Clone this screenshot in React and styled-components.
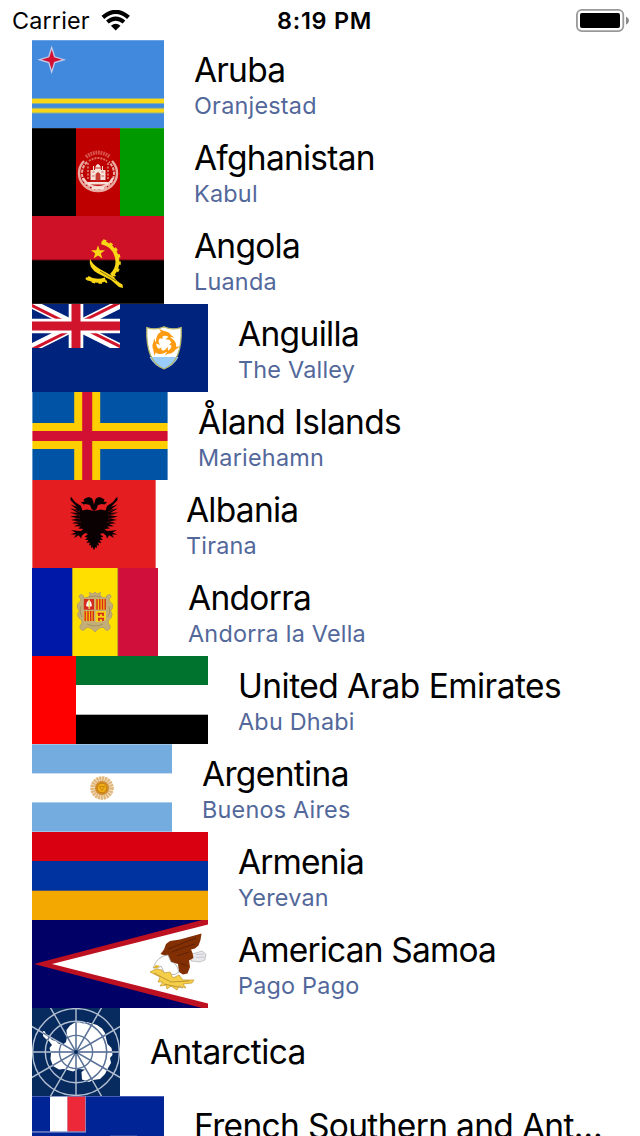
import React from 'react';
import styled, { createGlobalStyle } from 'styled-components';

const GlobalStyle = createGlobalStyle`
  * { box-sizing: border-box; }
  body {
    margin: 0;
    background: #fff;
    font-family: Inter, "Liberation Sans", sans-serif;
  }
`;

const Screen = styled.main`
  width: 640px;
  height: 1136px;
  overflow: hidden;
  background: #fff;
`;

const StatusBar = styled.header`
  display: grid;
  grid-template-columns: 265px 1fr auto;
  align-items: center;
  height: 40px;
  padding: 1px 11px 0 12px;
  color: #000;
  font-size: 23.4px;
  line-height: 28px;
`;

const CarrierGroup = styled.div`
  display: flex;
  align-items: center;
  gap: 11px;
`;

const Carrier = styled.span`
  letter-spacing: 0.15px;
`;

const Clock = styled.time`
  font-weight: 600;
  letter-spacing: 0.75px;
`;

const CountryList = styled.ul`
  margin: 0;
  padding: 0;
  list-style: none;
`;

const CountryRow = styled.li`
  display: flex;
  align-items: center;
  gap: 30px;
  height: 88px;
  padding-left: 32px;
`;

const FlagImage = styled.svg`
  flex: none;
  display: block;
  width: ${(p) => p.$width}px;
  height: 88px;
  overflow: hidden;
`;

const Labels = styled.div`
  display: flex;
  flex-direction: column;
  gap: 2px;
  padding-top: ${(p) => (p.$twoLines ? 1 : 0)}px;
  white-space: nowrap;
`;

const Name = styled.span`
  color: #000;
  font-size: 33.5px;
  line-height: 40px;
  letter-spacing: ${(p) => p.$tracking}px;
`;

const Capital = styled.span`
  min-height: 28px;
  color: #53689a;
  font-size: 23.4px;
  line-height: 28px;
  letter-spacing: 0.22px;
`;

const WifiIcon = () => (
  <svg width="29" height="21" viewBox="0 0 29 21">
    <g fill="none" stroke="#000">
      <path d="M1.9 7.4 Q14.7 -3.6 27.5 7.4" strokeWidth="4.2" />
      <path d="M6.4 12.1 Q14.7 5 23 12.1" strokeWidth="4" />
    </g>
    <path d="M9.9 15.8 Q14.7 11.8 19.5 15.8 L14.7 20.6 Z" />
  </svg>
);

const BatteryIcon = () => (
  <svg width="53" height="24" viewBox="0 0 53 24">
    <rect x="0.9" y="0.9" width="46.4" height="21.2" rx="5" fill="none" stroke="#999" strokeWidth="1.8" />
    <rect x="4" y="4" width="40" height="15" rx="2" />
    <path d="M50 7.5 Q53 9 53 11.6 Q53 14.2 50 15.7 Z" fill="#888" />
  </svg>
);

const Aruba = () => (
  <>
    <rect width="132" height="88" fill="#4189dd" />
    <rect width="132" height="1" fill="#6aa2e4" />
    <path d="M0 61H132M0 70.6H132" stroke="#8eaf8e" strokeWidth="5.8" />
    <path d="M0 61H132M0 70.6H132" stroke="#f9d616" strokeWidth="3.8" />
    <path d="M19.7 7.5 L22.6 16.8 L32 19.7 L22.6 22.6 L19.7 32 L16.8 22.6 L7.4 19.7 L16.8 16.8Z" fill="#d21034" stroke="#c5c8e6" strokeWidth="1.3" />
  </>
);

const Afghanistan = () => (
  <>
    <rect width="44" height="88" />
    <rect x="44" width="44" height="88" fill="#be0000" />
    <rect x="88" width="44" height="88" fill="#009900" />
    <rect width="132" height="1" fill="#fff" opacity=".13" />
    <g fill="none" stroke="#e9aca2">
      <path d="M52 33 A19 18 0 1 0 80 33" strokeWidth="2.4" />
      <path d="M55 34 A16 16 0 1 0 77 34" strokeWidth="2" strokeDasharray="3.2 1.2" />
      <path d="M51 50 A17 17 0 0 0 81 50" strokeWidth="2.2" stroke="#f4d5cd" />
      <path d="M54 29 Q66 20 78 29" stroke="#d7534c" strokeWidth="4" strokeDasharray="1.8 .8" />
      <path d="M57 33 Q66 27 75 33" stroke="#dc6a60" strokeWidth="2" strokeDasharray="2 1" />
      <path d="M56 35V51M76 35V51" strokeWidth="1.2" strokeDasharray="2 1.5" />
    </g>
    <g fill="#f6e2d9">
      <path d="M58.5 52V42h2.5v-4h1v4h1q0-5 3-6q3 1 3 6h1v-4h1v4h2.5v10z" />
      <path d="M56 54h20v2.4h-20zM60 59h12v2.6h-12z" />
    </g>
    <path d="M64 52v-6q2-3 4 0v6zM60.5 44h2M69.5 44h2M60 48h2.5M69.5 48h2.5" fill="#c83a30" stroke="#c83a30" strokeWidth=".8" />
    <path d="M58 53H74M62 40H70" stroke="#c72d25" strokeWidth="1" />
  </>
);

const Angola = () => (
  <>
    <rect width="132" height="44" fill="#ce1126" />
    <rect y="44" width="132" height="44" />
    <rect y="43.5" width="132" height="1" fill="#670913" />
    <rect y="87" width="132" height="1" fill="#252525" />
    <g fill="none" stroke="#f9d616">
      <path d="M69.5 26.4 A19.5 19.5 0 0 1 79.5 59.5" strokeWidth="4" />
      <path d="M71 24.4 A21.6 21.6 0 0 1 82 60" strokeWidth="2.4" strokeDasharray="3.4 3.8" />
      <path d="M55.5 61.5 Q63 67 73.5 63.5" strokeWidth="4" />
      <path d="M54 62 Q63 69 75 65.5" strokeWidth="2.4" strokeDasharray="3.4 3.4" />
    </g>
    <path d="M58 42.5 Q60 48 67 52.5 L82 61 Q84 65 90.5 68.5 L91 72 L87 71 L79 64 L66 57.5 Q56 52 58 42.5Z" fill="#f9d616" />
    <path d="M68 55 L84 65" stroke="#6d5c0c" strokeWidth=".8" />
    <path d="M66 29.2 L67.7 34.2 H73 L68.8 37.4 L70.4 42.4 L66 39.4 L61.6 42.4 L63.2 37.4 L59 34.2 H64.3Z" fill="#f9d616" />
  </>
);

const Anguilla = () => (
  <>
    <rect width="176" height="88" fill="#00247d" />
    <svg width="88" height="44" viewBox="0 0 88 44">
      <path d="M0 0L88 44M88 0L0 44" stroke="#fff" strokeWidth="8.8" />
      <path d="M-1 1L43 23M44 20.5L89 43" stroke="#cf142b" strokeWidth="3" />
      <path d="M44 20.5L88 -1.5M0 45.5L44 23.5" stroke="#cf142b" strokeWidth="3" />
      <path d="M44 0V44M0 22H88" stroke="#fff" strokeWidth="14.6" />
      <path d="M44 0V44M0 22H88" stroke="#cf142b" strokeWidth="9" />
    </svg>
    <path d="M114.8 23.6 Q124 26.5 132 22.8 Q140 26.5 149.2 23.6 Q150.5 58 132 65 Q113.5 58 114.8 23.6Z" fill="#fff" />
    <path d="M117.5 53 H146.5 Q142 62 132 65 Q122 62 117.5 53Z" fill="#99ccff" />
    <path d="M114.8 23.6 Q124 26.5 132 22.8 Q140 26.5 149.2 23.6 Q150.5 58 132 65 Q113.5 58 114.8 23.6Z" fill="none" stroke="#b4b56a" strokeWidth="1.3" />
    <g fill="#ff9b10">
      <path id="dolphin" d="M124 37.5 Q124 30 129 28 L127 25 L132 27 Q137 27.5 139 31 L142 33.5 L137 33 Q133 31 130.5 32.5 L130.5 35 L128 34.2 Q126.5 35.5 126.5 37.5 L128 41 L124.5 39.5 L121.5 42Z" />
      <use href="#dolphin" transform="rotate(120 132.3 39.7)" />
      <use href="#dolphin" transform="rotate(240 132.3 39.7)" />
    </g>
  </>
);

const Aland = () => (
  <>
    <rect width="136" height="88" fill="#0053a5" />
    <path d="M55.2 0V88M0 44.1H136" stroke="#ffce00" strokeWidth="26" />
    <path d="M55.2 0V88M0 44.1H136" stroke="#d21034" strokeWidth="10" />
    <path d="M.5 0V88M135.5 0V88" stroke="#fff" strokeOpacity=".4" />
  </>
);

const Albania = () => (
  <>
    <rect width="124" height="88" fill="#e41e20" />
    <path d="M.5 0V88M123.5 0V88" stroke="#fff" strokeOpacity=".35" />
    <g id="eagle-half">
      <path d="M62.2 31 L59.5 29 L58 25 L54 24 L51.5 24.5 L48.8 22.2 L52.5 21.5 L51.5 19.5 L54.5 17.8 L57 17 L60.2 18.5 L61.4 22 L62.2 26 L62.2 70 L60.5 67 L59 68 L59.2 65 L57 65.5 L58 62.5 L54.5 63 L56.5 60 L53 60 L55.5 57.5 L52.5 57 L56 54 L53 53 L50 55.5 L49 58.5 L46.8 55.2 L42 58 L44 54.5 L38.5 54.5 L43.5 52.5 L39 50 L45 50.8 L49 51 L51.5 49 L46 48.5 L49 46.5 L42 46.2 L47 44 L40 43.2 L46 41.3 L38.8 40 L45.5 38.6 L38.2 36.5 L45.4 35.6 L38 32.5 L45.5 32.8 L38.2 28.5 L45 29.6 L38.4 24.5 L44.8 26.8 L38.4 20 L38.8 16.5 L43 22 L49 26 L50.5 30.5 L55 29.5Z" fill="#0a0102" />
      <path d="M41 29 L48 32M41 33.5 L48 35.5M42 37.8 L48 39M43 41.8 L49 42.2" stroke="#8a1315" strokeWidth=".6" fill="none" />
    </g>
    <use href="#eagle-half" transform="matrix(-1 0 0 1 124 0)" />
  </>
);

const Andorra = () => (
  <>
    <rect width="126" height="88" fill="#0018a8" />
    <rect x="40" width="46" height="88" fill="#fedf00" />
    <rect x="86" width="40" height="88" fill="#d0103a" />
    <path d="M40.5 0V88M85.7 0V88" stroke="#a58830" strokeWidth=".8" />
    <path d="M49 31 Q45 28 49 26.5 Q52 27 52 30 Q56 30 58 27.5 L57.5 24.5 L61 26 L63 24 L65 26 L68.5 24.5 L68 27.5 Q70 30 74 30 Q74 27 77 26.5 Q81 28 77 31 Q77 34 80.5 36 Q81.5 40 78.5 43 Q81.5 46 79 50 Q76 51 76 55 Q80 59 76.5 62 Q73 63 72 59.5 Q68 59 66 61 L63 64 L60 61 Q58 59 54 59.5 Q53 63 49.5 62 Q46 59 50 55 Q50 51 47 50 Q44 46 47.5 43 Q44.5 40 45.5 36 Q49 34 49 31Z" fill="#c4ae78" stroke="#b39d66" strokeWidth=".9" />
    <path d="M49 38 Q47 44 50 49M77 38 Q79 44 76 49M55 56 Q63 60 71 56M57 29 Q63 27 69 29" fill="none" stroke="#a08b5c" strokeWidth=".9" />
    <rect x="51.8" y="31" width="10.2" height="10.7" fill="#d52b1e" />
    <path d="M55 34 L57 32 L59 34 L60 38 L57 39 L54 38Z" fill="#fff" />
    <path d="M57.2 31.5V41" stroke="#eddc5a" strokeWidth="1.3" />
    <rect x="63.5" y="31" width="10.5" height="10.7" fill="#f4ba13" />
    <path d="M65 31V41.7M67.8 31V41.7M70.5 31V41.7M73.2 31V41.7" stroke="#d52b1e" strokeWidth="1.4" />
    <rect x="51.8" y="43" width="10.2" height="10" fill="#f4ba13" />
    <path d="M53.2 43V53M56 43V53M58.7 43V53M61.3 43V53" stroke="#d52b1e" strokeWidth="1.4" />
    <path d="M63.5 43H74V51Q72 54 63.5 54Z" fill="#f7d117" />
    <path d="M65.5 45.5H72M66 50.5H72M67 45V48M71 45V48M67 50V53M71 50V53" stroke="#d52b1e" strokeWidth="1.7" />
  </>
);

const Emirates = () => (
  <>
    <rect width="176" height="88" fill="#fff" />
    <rect width="176" height="29" fill="#00732f" />
    <rect y="58.7" width="176" height="29.3" />
    <rect width="44" height="88" fill="#f00" />
  </>
);

const Argentina = () => (
  <>
    <rect width="140" height="88" fill="#74acdf" />
    <rect y="29.4" width="140" height="29" fill="#fff" />
    <path d="M0 .5H140M0 87.5H140" stroke="#fff" strokeOpacity=".3" />
    <circle cx="70" cy="44" r="11.4" fill="#ecd2ac" opacity=".6" />
    <circle cx="70" cy="44" r="9.2" fill="none" stroke="#dba75f" strokeWidth="5.2" strokeDasharray="1.9 .8" opacity=".75" />
    <circle cx="70" cy="44" r="7" fill="#d18c2c" />
    <circle cx="70" cy="44" r="4.8" fill="#f1ad12" stroke="#ba7817" strokeWidth=".8" />
    <path d="M67.5 42.5H72.5L70 46.5Z" fill="none" stroke="#c07d12" strokeWidth=".8" />
  </>
);

const Armenia = () => (
  <>
    <rect width="176" height="29.3" fill="#d90012" />
    <rect y="29" width="176" height="30" fill="#0033a0" />
    <rect y="58.7" width="176" height="29.3" fill="#f2a800" />
  </>
);

const AmericanSamoa = () => (
  <>
    <rect width="176" height="88" fill="#006" />
    <path d="M2 44 L176 -1.6V89.6Z" fill="#bd1021" />
    <path d="M20 44 L176 4.6V83.4Z" fill="#fff" />
    <path d="M160 34 L170 31 L174 34 L173 40 L168 42 L159 41Z" fill="#e8e8ec" stroke="#aaa" strokeWidth=".6" />
    <path d="M164 34.5 L172 34M164 37.5 L173 37" stroke="#b4b4ba" strokeWidth=".6" />
    <path d="M128.5 34 L132 29.5 L134 24 L138 21 L148 19.5 L169.5 13.5 L168.5 20 L166.5 25.5 L163 28.5 L159 29.5 L160.5 33 L161.5 38 L157 40.5 L158 47 L155.5 53.5 L151 54.5 L147 52 L146 44 L139 42 L134 36Z" fill="#822f04" />
    <path d="M136 29 L151 23 L164 18M140 32 L153 27 L163 24M145 36 L157 32M148 43 L155 46" stroke="#5e2104" strokeWidth="1" fill="none" />
    <path d="M136 35 Q128 36 124 42 L121 48 L126 48 L129 46 L133 54 L143 54.5 L147 52 Q145 43 139 42Z" fill="#fff" stroke="#a5a8ad" strokeWidth=".8" />
    <path d="M124 45 L128 46 L125 48 L121 48Z" fill="#e1b12c" />
    <path d="M118 52 L124 49 L130 50 L132 53 L138 52 L141 58 L147 55 L151 60 L162 60 L160 63 L151 64 L154 68 L147 66 L145 70 L139 66 L135 69 L134 65 L128 66 L131 62 L126 62 L128 57Z" fill="#f5cf49" stroke="#c9a036" strokeWidth=".8" />
    <path d="M122 53 L139 62 L157 61M132 64 L151 68" stroke="#a67e23" strokeWidth=".7" fill="none" />
  </>
);

const spokes = [0, 30, 60, 90, 120, 150];

const Antarctica = () => (
  <>
    <rect width="88" height="88" fill="#072b5f" />
    <path id="ice" d="M11 23 L13 23.5 L14 27 L17 28.5 L20 32 L24 33 L27 36 L31 36.5 L34 34 L35 29 L34.5 22 L38 17.5 L42 15 L47 14 L51 15.5 L55 14 L60 15.5 L65 17 L70 20.5 L73 25 L74 30 L75.5 36 L79.5 40 L80.5 47 L78 50 L79 55 L76 60 L73 66 L68 71 L61 72 L57 74 L50 71.5 L49.5 64 L53 61.5 L46 61 L41 63.5 L32 61 L27 61.5 L21 58 L18.5 51 L19 45 L17.5 40 L20 37 L17 33 L14 31 L11 28Z" fill="#fff" />
    <g fill="none" stroke="#b4c0d2" strokeWidth="1.4">
      <circle cx="44" cy="44" r="43.4" />
      <circle cx="44" cy="44" r="30.7" />
      {spokes.map((a) => (
        <path key={a} d="M-18 44H106" transform={`rotate(${a} 44 44)`} />
      ))}
    </g>
    <clipPath id="ice-area"><use href="#ice" /></clipPath>
    <g fill="none" stroke="#5b7298" strokeWidth="1.4" clipPath="url(#ice-area)">
      <circle cx="44" cy="44" r="30.7" />
      <circle cx="44" cy="44" r="16.6" />
      {spokes.map((a) => (
        <path key={a} d="M-18 44H106" transform={`rotate(${a} 44 44)`} />
      ))}
    </g>
    <circle cx="44" cy="44" r="2" fill="#072b5f" />
  </>
);

const FrenchSouthern = () => (
  <>
    <rect width="132" height="88" fill="#002395" />
    <rect width="54" height="36.6" fill="#8593ca" />
    <rect width="18" height="35.3" fill="#002395" />
    <rect x="18" width="17.5" height="35.3" fill="#fff" />
    <rect x="35.5" width="17.7" height="35.3" fill="#ed2939" />
    <rect width="132" height="1" fill="#6377bd" opacity=".7" />
    <path d="M78 39.5H105V43H78Z" fill="#5468b4" />
  </>
);

const countries = [
  { name: 'Aruba', capital: 'Oranjestad', width: 132, Flag: Aruba, tracking: -0.8 },
  { name: 'Afghanistan', capital: 'Kabul', width: 132, Flag: Afghanistan, tracking: -0.75 },
  { name: 'Angola', capital: 'Luanda', width: 132, Flag: Angola, tracking: -0.75 },
  { name: 'Anguilla', capital: 'The Valley', width: 176, Flag: Anguilla, tracking: -0.65 },
  { name: 'Åland Islands', capital: 'Mariehamn', width: 136, Flag: Aland, tracking: -0.63 },
  { name: 'Albania', capital: 'Tirana', width: 124, Flag: Albania, tracking: -0.75 },
  { name: 'Andorra', capital: 'Andorra la Vella', width: 126, Flag: Andorra, tracking: -0.7 },
  { name: 'United Arab Emirates', capital: 'Abu Dhabi', width: 176, Flag: Emirates, tracking: -0.56 },
  { name: 'Argentina', capital: 'Buenos Aires', width: 140, Flag: Argentina, tracking: -0.65 },
  { name: 'Armenia', capital: 'Yerevan', width: 176, Flag: Armenia, tracking: -0.85 },
  { name: 'American Samoa', capital: 'Pago Pago', width: 176, Flag: AmericanSamoa, tracking: -0.83 },
  { name: 'Antarctica', width: 88, Flag: Antarctica, tracking: -0.55 },
  { name: 'French Southern and Ant…', capital: '\u00a0', width: 132, Flag: FrenchSouthern, tracking: -0.66 },
];

const Country = ({ name, capital, width, Flag, tracking }) => (
  <CountryRow>
    <FlagImage $width={width} viewBox={`0 0 ${width} 88`}>
      <Flag />
    </FlagImage>
    <Labels $twoLines={Boolean(capital)}>
      <Name $tracking={tracking}>{name}</Name>
      {capital && <Capital>{capital}</Capital>}
    </Labels>
  </CountryRow>
);

export default function App() {
  return (
    <Screen>
      <GlobalStyle />
      <StatusBar>
        <CarrierGroup>
          <Carrier>Carrier</Carrier>
          <WifiIcon />
        </CarrierGroup>
        <Clock>8:19 PM</Clock>
        <BatteryIcon />
      </StatusBar>
      <CountryList>
        {countries.map((country) => (
          <Country key={country.name} {...country} />
        ))}
      </CountryList>
    </Screen>
  );
}
